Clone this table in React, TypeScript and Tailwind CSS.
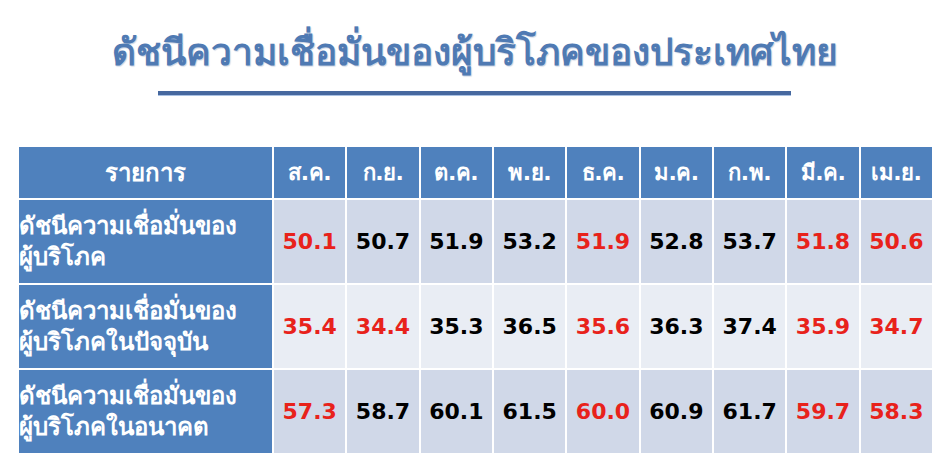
const months = ["ส.ค.", "ก.ย.", "ต.ค.", "พ.ย.", "ธ.ค.", "ม.ค.", "ก.พ.", "มี.ค.", "เม.ย."];

const rows = [
  {
    label: ["ดัชนีความเชื่อมั่นของ", "ผู้บริโภค"],
    bg: "bg-[#d0d8e8]",
    values: ["50.1", "50.7", "51.9", "53.2", "51.9", "52.8", "53.7", "51.8", "50.6"],
    red: [0, 4, 7, 8],
  },
  {
    label: ["ดัชนีความเชื่อมั่นของ", "ผู้บริโภคในปัจจุบัน"],
    bg: "bg-[#e9edf4]",
    values: ["35.4", "34.4", "35.3", "36.5", "35.6", "36.3", "37.4", "35.9", "34.7"],
    red: [0, 1, 4, 7, 8],
  },
  {
    label: ["ดัชนีความเชื่อมั่นของ", "ผู้บริโภคในอนาคต"],
    bg: "bg-[#d0d8e8]",
    values: ["57.3", "58.7", "60.1", "61.5", "60.0", "60.9", "61.7", "59.7", "58.3"],
    red: [0, 4, 7, 8],
  },
];

export default function App() {
  return (
    <div
      className="w-[950px] h-[475px] bg-white overflow-hidden"
      style={{ fontFamily: '"DejaVu Sans", "Noto Sans", sans-serif' }}
    >
      {/* Title */}
      <div className="flex flex-col items-center pt-[29px]">
        <h1 className="text-[37px] leading-[48px] font-bold text-[#4f7ab3] [text-shadow:1px_1px_1px_#c9d3e3]">
          ดัชนีความเชื่อมั่นของผู้บริโภคของประเทศไทย
        </h1>
        <div className="mt-[14px] w-[633px] h-[5px] bg-[#46689f] border-b border-[#a9c1e3] ml-[-1px]" />
      </div>

      {/* Table */}
      <div className="ml-[19px] mt-[51px] w-[913px] grid grid-cols-[253px_repeat(9,1fr)] gap-[2px] bg-white">
        <div className="h-[51px] bg-[#4f81bd] flex items-center justify-center text-white font-bold text-[24px]">
          รายการ
        </div>
        {months.map((m) => (
          <div
            key={m}
            className="h-[51px] bg-[#4f81bd] flex items-center justify-center text-white font-bold text-[22px] tracking-[-0.5px]"
          >
            {m}
          </div>
        ))}

        {rows.map((r, i) => (
          <div key={i} className="contents">
            <div className="h-[83px] bg-[#4f81bd] flex flex-col justify-center text-white font-bold text-[24px] leading-[31px]">
              <span>{r.label[0]}</span>
              <span>{r.label[1]}</span>
            </div>
            {r.values.map((v, j) => (
              <div
                key={j}
                className={`h-[83px] ${r.bg} flex items-center justify-center font-bold text-[22px] ${
                  r.red.includes(j) ? "text-[#e8221b]" : "text-black"
                }`}
              >
                {v}
              </div>
            ))}
          </div>
        ))}
      </div>
    </div>
  );
}
